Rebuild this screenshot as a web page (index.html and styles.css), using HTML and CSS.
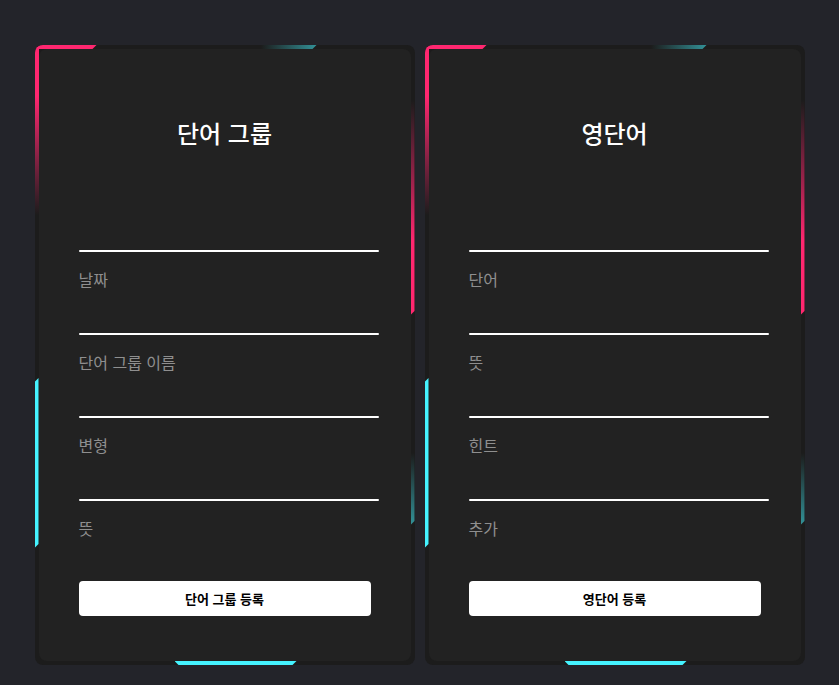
FILE: index.html
```html
<!DOCTYPE html>
<html lang="ko">
<head>
<meta charset="utf-8">
<title>단어 등록</title>
<link rel="stylesheet" href="styles.css">
</head>
<body>
<div class="page">
  <div class="card">
    <span class="seg seg-top-pink"></span>
    <span class="seg seg-left-pink"></span>
    <span class="seg seg-top-teal"></span>
    <span class="seg seg-right-pink"></span>
    <span class="seg seg-right-teal"></span>
    <span class="seg seg-left-cyan"></span>
    <span class="seg seg-bottom-cyan"></span>
    <form class="form">
      <h2 class="title">단어 그룹</h2>
      <div class="fields">
        <div class="field"><input class="input" type="text"><i class="line"></i><span class="label">날짜</span></div>
        <div class="field"><input class="input" type="text"><i class="line"></i><span class="label">단어 그룹 이름</span></div>
        <div class="field"><input class="input" type="text"><i class="line"></i><span class="label">변형</span></div>
        <div class="field"><input class="input" type="text"><i class="line"></i><span class="label">뜻</span></div>
      </div>
      <button class="submit" type="button">단어 그룹 등록</button>
    </form>
  </div>
  <div class="card">
    <span class="seg seg-top-pink"></span>
    <span class="seg seg-left-pink"></span>
    <span class="seg seg-top-teal"></span>
    <span class="seg seg-right-pink"></span>
    <span class="seg seg-right-teal"></span>
    <span class="seg seg-left-cyan"></span>
    <span class="seg seg-bottom-cyan"></span>
    <form class="form">
      <h2 class="title">영단어</h2>
      <div class="fields">
        <div class="field"><input class="input" type="text"><i class="line"></i><span class="label">단어</span></div>
        <div class="field"><input class="input" type="text"><i class="line"></i><span class="label">뜻</span></div>
        <div class="field"><input class="input" type="text"><i class="line"></i><span class="label">힌트</span></div>
        <div class="field"><input class="input" type="text"><i class="line"></i><span class="label">추가</span></div>
      </div>
      <button class="submit" type="button">영단어 등록</button>
    </form>
  </div>
</div>
</body>
</html>
```
FILE: styles.css
```css
* { box-sizing: border-box; }
html, body { margin: 0; padding: 0; }
body {
  background: #23242a;
  font-family: "Noto Sans CJK KR", "Noto Sans", sans-serif;
  height: 685px;
  overflow: hidden;
}
.page {
  display: flex;
  justify-content: center;
  gap: 10px;
  padding-top: 45px;
}
.card {
  position: relative;
  width: 380px;
  height: 620px;
  background: #1c1c1c;
  border-radius: 8px;
  overflow: hidden;
  flex: none;
}
.seg {
  position: absolute;
  display: block;
  z-index: 1;
}
.seg-top-pink {
  left: 0; top: 0; width: 62px; height: 4px;
  background: #ff2770;
  clip-path: polygon(0 0, 100% 0, calc(100% - 4px) 100%, 0 100%);
}
.seg-left-pink {
  left: 0; top: 0; width: 4px; height: 170px;
  background: linear-gradient(to bottom, #ff2770 0%, #ff2770 30%, rgba(255,39,112,0.35) 75%, rgba(255,39,112,0) 100%);
}
.seg-top-teal {
  left: 226px; top: 0; width: 56px; height: 4px;
  background: linear-gradient(to right, rgba(69,243,255,0), rgba(69,243,255,0.55));
  clip-path: polygon(0 0, 100% 0, calc(100% - 4px) 100%, 0 100%);
}
.seg-right-pink {
  right: 0; top: 55px; width: 4px; height: 215px;
  background: linear-gradient(to bottom, rgba(255,39,112,0) 0%, rgba(255,39,112,0.6) 40%, #ff2770 65%, #ff2770 100%);
  clip-path: polygon(0 0, 100% 0, 100% calc(100% - 4px), 0 100%);
}
.seg-right-teal {
  right: 0; top: 408px; width: 4px; height: 72px;
  background: linear-gradient(to bottom, rgba(69,243,255,0), rgba(69,243,255,0.55));
  clip-path: polygon(0 0, 100% 0, 100% calc(100% - 4px), 0 100%);
}
.seg-left-cyan {
  left: 0; top: 333px; width: 4px; height: 170px;
  background: #45f3ff;
  clip-path: polygon(0 4px, 100% 0, 100% calc(100% - 4px), 0 100%);
}
.seg-bottom-cyan {
  left: 140px; bottom: 0; width: 122px; height: 4px;
  background: #45f3ff;
  clip-path: polygon(0 0, 100% 0, calc(100% - 4px) 100%, 4px 100%);
}
.form {
  position: absolute;
  inset: 4px;
  z-index: 2;
  background: #222222;
  border-radius: 8px;
  padding: 50px 40px 0;
  display: flex;
  flex-direction: column;
  margin: 0;
}
.form > * { flex: none; }
.title {
  margin: 17px 0 0;
  color: #ffffff;
  font-size: 24px;
  line-height: 34px;
  font-weight: 500;
  text-align: center;
}
.fields {
  margin-top: 57px;
  display: flex;
  flex-direction: column;
  width: 300px;
}
.field {
  display: flex;
  flex-direction: column;
  flex: none;
}
.input {
  height: 43px;
  width: 100%;
  background: transparent;
  border: none;
  outline: none;
  color: #23242a;
  padding: 0;
  margin: 0;
  font: inherit;
  flex: none;
}
.line {
  display: block;
  height: 2px;
  width: 100%;
  background: #ffffff;
  border-radius: 4px;
  flex: none;
}
.label {
  padding-top: 17px;
  line-height: 20px;
  height: 38px;
  font-size: 16px;
  color: #8f8f8f;
  flex: none;
}
.submit {
  margin-top: 42px;
  width: 292px;
  height: 35px;
  border: none;
  border-radius: 4px;
  background: #ffffff;
  color: #000000;
  font-family: "Noto Sans CJK KR", "Noto Sans", sans-serif;
  font-size: 13px;
  font-weight: 700;
  padding: 0;
}
```
